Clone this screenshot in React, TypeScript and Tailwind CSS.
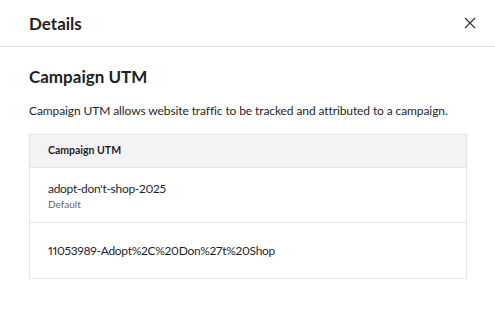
import React from 'react';

const rows = [
     { value: "adopt-don't-shop-2025", note: 'Default' },
     { value: '11053989-Adopt%2C%20Don%27t%20Shop', note: '' },
];

const App = () => {
     return (
          <div className="w-[495px] h-[312px] bg-white text-[#1f1f1f] font-['Lato',sans-serif] overflow-hidden">
               <div className="flex items-center justify-between h-[47px] pl-[29px] pr-[18px] border-b border-[#e3e3e3]">
                    <h1 className="text-[17px] font-bold leading-none">Details</h1>
                    <button className="w-[14px] h-[14px] flex items-center justify-center text-[#333]">
                         <svg width="12" height="12" viewBox="0 0 12 12" fill="none" stroke="currentColor" strokeWidth="1.2">
                              <path d="M1 1L11 11M11 1L1 11" />
                         </svg>
                    </button>
               </div>

               <div className="px-[29px] pt-[19px]">
                    <h2 className="text-[17px] font-bold leading-[22px]">Campaign UTM</h2>
                    <p className="mt-[14px] text-[12px] tracking-[-0.1px] leading-[18px]">
                         Campaign UTM allows website traffic to be tracked and attributed to a campaign.
                    </p>

                    <div className="mt-[14px] w-[438px] border border-[#e6e6e6]">
                         <div className="h-[33px] flex items-center px-[18px] bg-[#f5f2f6] border-b border-[#e6e6e6]">
                              <span className="text-[10.5px] font-bold">Campaign UTM</span>
                         </div>
                         {rows.map((row, idx) => (
                              <div
                                   key={idx}
                                   className={`h-[55px] flex flex-col justify-center px-[18px] ${idx < rows.length - 1 ? 'border-b border-[#e6e6e6]' : ''}`}
                              >
                                   <span className="text-[12px] tracking-[-0.3px] proportional-nums leading-[17px]">{row.value}</span>
                                   {row.note && <span className="text-[10px] leading-[14px] text-[#666]">{row.note}</span>}
                              </div>
                         ))}
                    </div>
               </div>
          </div>
     );
};

export default App;
